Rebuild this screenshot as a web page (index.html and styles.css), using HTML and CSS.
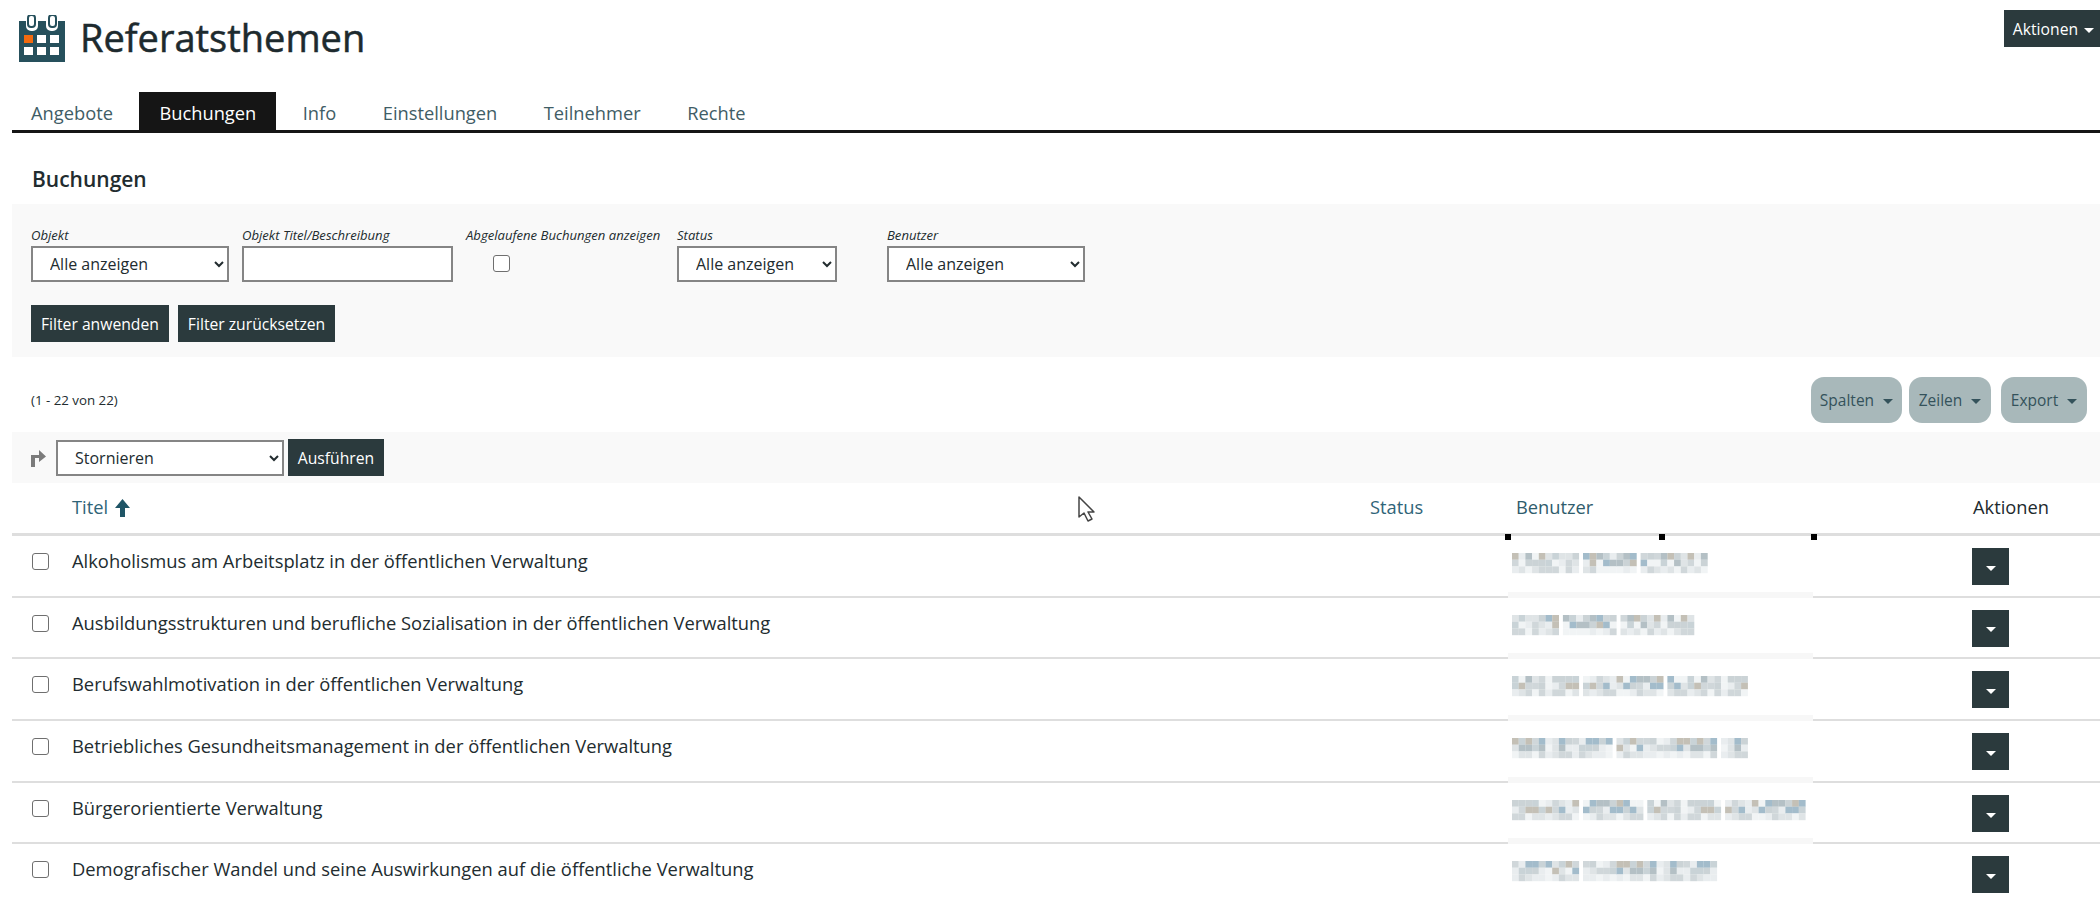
FILE: index.html
```html
<!DOCTYPE html>
<html lang="de">

<head>
    <meta charset="UTF-8">
    <title>Referatsthemen</title>
    <link rel="stylesheet" href="styles.css">
</head>

<body>
    <header class="page-head">
        <div class="title-wrap">
            <svg class="title-icon" viewBox="0 0 48 47" width="48" height="47">
                <path fill="#26505c" d="M1 6h7v5a5 5 0 0 0 5 5h2a5 5 0 0 0 5-5V6h8v5a5 5 0 0 0 5 5h2a5 5 0 0 0 5-5V6h7v41H1z" />
                <rect x="10" y="0" width="7" height="12" rx="3" fill="none" stroke="#26505c" stroke-width="2" />
                <rect x="31" y="0" width="7" height="12" rx="3" fill="none" stroke="#26505c" stroke-width="2" />
                <rect x="6" y="20" width="9" height="8" fill="#f26a0f" />
                <rect x="19" y="20" width="9" height="8" fill="#fff" />
                <rect x="32" y="20" width="9" height="8" fill="#fff" />
                <rect x="6" y="32" width="9" height="8" fill="#fff" />
                <rect x="19" y="32" width="9" height="8" fill="#fff" />
                <rect x="32" y="32" width="9" height="8" fill="#fff" />
            </svg>
            <h1>Referatsthemen</h1>
        </div>
        <button class="btn btn-top">Aktionen <span class="caret"></span></button>
    </header>

    <nav class="tabs">
        <a href="#">Angebote</a>
        <a href="#" class="active">Buchungen</a>
        <a href="#">Info</a>
        <a href="#">Einstellungen</a>
        <a href="#">Teilnehmer</a>
        <a href="#">Rechte</a>
    </nav>

    <h2>Buchungen</h2>

    <section class="filter">
        <div class="filter-row">
            <div class="field f-objekt">
                <label>Objekt</label>
                <select>
                    <option>Alle anzeigen</option>
                </select>
            </div>
            <div class="field f-titel">
                <label>Objekt Titel/Beschreibung</label>
                <input type="text">
            </div>
            <div class="field f-abgelaufen">
                <label>Abgelaufene Buchungen anzeigen</label>
                <input type="checkbox" class="check">
            </div>
            <div class="field f-status">
                <label>Status</label>
                <select>
                    <option>Alle anzeigen</option>
                </select>
            </div>
            <div class="field f-benutzer">
                <label>Benutzer</label>
                <select>
                    <option>Alle anzeigen</option>
                </select>
            </div>
        </div>
        <div class="filter-buttons">
            <button class="btn">Filter anwenden</button>
            <button class="btn">Filter zurücksetzen</button>
        </div>
    </section>

    <div class="toolbar">
        <span class="count">(1 - 22 von 22)</span>
        <div class="toolbar-buttons">
            <button class="pill">Spalten <span class="caret"></span></button>
            <button class="pill">Zeilen <span class="caret"></span></button>
            <button class="pill pill-export">Export <span class="caret"></span></button>
        </div>
    </div>

    <div class="bulk">
        <svg class="bulk-icon" viewBox="0 0 16 18" width="16" height="18">
            <path fill="#7b7b7b" d="M1 18V6h8V1l7 6.5L9 13V9H5v9z" />
        </svg>
        <select>
            <option>Stornieren</option>
        </select>
        <button class="btn">Ausführen</button>
    </div>

    <table class="bookings">
        <colgroup>
            <col class="c-check">
            <col class="c-titel">
            <col class="c-status">
            <col class="c-user">
            <col>
        </colgroup>
        <thead>
            <tr>
                <th></th>
                <th>Titel
                    <svg class="sort-icon" viewBox="0 0 15 18" width="15" height="18">
                        <path fill="#1f5566" d="M7.5 0L15 9h-5v9H5V9H0z" />
                    </svg>
                </th>
                <th>Status</th>
                <th class="th-user">Benutzer
                    <i class="handle h1"></i><i class="handle h2"></i><i class="handle h3"></i>
                </th>
                <th class="th-actions">Aktionen</th>
            </tr>
        </thead>
        <tbody>
            <tr>
                <td><input type="checkbox" class="check"></td>
                <td>Alkoholismus am Arbeitsplatz in der öffentlichen Verwaltung</td>
                <td></td>
                <td class="user"><div class="mosaic" data-words="10,8,10" data-seed="3"></div></td>
                <td><button class="btn btn-row"><span class="caret"></span></button></td>
            </tr>
            <tr>
                <td><input type="checkbox" class="check"></td>
                <td>Ausbildungsstrukturen und berufliche Sozialisation in der öffentlichen Verwaltung</td>
                <td></td>
                <td class="user"><div class="mosaic" data-words="7,8,11" data-seed="11"></div></td>
                <td><button class="btn btn-row"><span class="caret"></span></button></td>
            </tr>
            <tr>
                <td><input type="checkbox" class="check"></td>
                <td>Berufswahlmotivation in der öffentlichen Verwaltung</td>
                <td></td>
                <td class="user"><div class="mosaic" data-words="10,12,12" data-seed="23"></div></td>
                <td><button class="btn btn-row"><span class="caret"></span></button></td>
            </tr>
            <tr>
                <td><input type="checkbox" class="check"></td>
                <td>Betriebliches Gesundheitsmanagement in der öffentlichen Verwaltung</td>
                <td></td>
                <td class="user"><div class="mosaic" data-words="15,15,4" data-seed="37"></div></td>
                <td><button class="btn btn-row"><span class="caret"></span></button></td>
            </tr>
            <tr>
                <td><input type="checkbox" class="check"></td>
                <td>Bürgerorientierte Verwaltung</td>
                <td></td>
                <td class="user"><div class="mosaic" data-words="10,9,11,12" data-seed="41"></div></td>
                <td><button class="btn btn-row"><span class="caret"></span></button></td>
            </tr>
            <tr>
                <td><input type="checkbox" class="check"></td>
                <td>Demografischer Wandel und seine Auswirkungen auf die öffentliche Verwaltung</td>
                <td></td>
                <td class="user"><div class="mosaic" data-words="10,20" data-seed="59"></div></td>
                <td><button class="btn btn-row"><span class="caret"></span></button></td>
            </tr>
        </tbody>
    </table>

    <svg class="cursor" viewBox="0 0 17 26" width="17" height="26">
        <path fill="#fff" stroke="#444" stroke-width="1.5" stroke-linejoin="round" d="M1 1v20l5-4 4 8 4-2-4-7h6z" />
    </svg>

    <script src="script.js"></script>
</body>

</html>
```

FILE: styles.css
```css
* {
    box-sizing: border-box;
    margin: 0;
    padding: 0;
    font-family: "Open Sans", Arial, sans-serif;
}

html {
    overflow: hidden;
}

body {
    position: relative;
    width: 2100px;
    background: #fff;
    color: #222c2f;
}

.page-head {
    display: flex;
    justify-content: space-between;
    align-items: flex-start;
    height: 92px;
    padding: 10px 0 0 18px;
}

.title-wrap {
    display: flex;
    align-items: flex-start;
    gap: 14px;
    padding-top: 5px;
}

.title-icon {
    display: block;
}

h1 {
    font-size: 38px;
    font-weight: 400;
    line-height: 44px;
    color: #1d2a2e;
    -webkit-text-stroke: 0.5px #1d2a2e;
}

.btn {
    background: #2b3a3d;
    color: #fff;
    border: none;
    font-size: 15.7px;
    height: 37px;
    padding: 0 10px;
}

.btn-top {
    width: 96px;
    white-space: nowrap;
    padding: 0 0 0 3px;
}

.caret {
    display: inline-block;
    border-top: 5px solid currentColor;
    border-left: 5px solid transparent;
    border-right: 5px solid transparent;
    margin-left: 2px;
    vertical-align: middle;
}

.tabs {
    display: flex;
    height: 41px;
    margin-left: 12px;
    border-bottom: 3px solid #151515;
    font-size: 18.3px;
}

.tabs a {
    display: block;
    padding: 0 20px;
    line-height: 42px;
    height: 38px;
    color: #3f5d66;
    text-decoration: none;
    margin-right: 6.5px;
}

.tabs a:first-child {
    padding-left: 19px;
}

.tabs a.active {
    background: #151515;
    color: #fff;
}

h2 {
    font-size: 21px;
    font-weight: 600;
    line-height: 30px;
    margin: 31px 0 10px 32px;
    color: #222c2f;
}

.filter {
    margin-left: 12px;
    height: 153px;
    background: #f9f9f9;
    padding: 20px 0 0 19px;
}

.filter-row {
    display: flex;
}

.field label {
    display: block;
    font-size: 13.1px;
    font-style: italic;
    line-height: 22px;
    color: #222c2f;
}

select {
    display: block;
    height: 36px;
    border: 2px solid #858585;
    background: #fff;
    font-size: 16px;
    padding-left: 13px;
    color: #222c2f;
}

.field input[type="text"] {
    display: block;
    height: 36px;
    width: 100%;
    border: 2px solid #858585;
    background: #fff;
}

.f-objekt {
    width: 211px;
}

.f-objekt select {
    width: 198px;
}

.f-titel {
    width: 224px;
}

.f-titel input[type="text"] {
    width: 211px;
}

.f-abgelaufen {
    width: 211px;
    white-space: nowrap;
}

.f-abgelaufen .check {
    margin: 9px 0 0 27px;
}

.f-status {
    width: 210px;
}

.f-status select {
    width: 160px;
}

.f-benutzer select {
    width: 198px;
}

.check {
    display: block;
    appearance: none;
    width: 17px;
    height: 17px;
    border: 1.5px solid #6f6f6f;
    border-radius: 3px;
    background: #fff;
}

.filter-buttons {
    display: flex;
    gap: 9px;
    margin-top: 23px;
}

.toolbar {
    display: flex;
    justify-content: space-between;
    align-items: center;
    height: 46px;
    margin: 20px 13px 9px 31px;
}

.count {
    font-size: 13.3px;
}

.toolbar-buttons {
    display: flex;
}

.pill {
    height: 46px;
    background: #a8b8ba;
    color: #34525b;
    border: none;
    border-radius: 13px;
    font-size: 15.5px;
    width: 91px;
    margin-right: 7px;
    white-space: nowrap;
}

.pill:nth-child(2) {
    width: 82px;
    margin-right: 10px;
}

.pill-export {
    width: 86px;
    margin-right: 0;
}

.pill .caret {
    margin-left: 5px;
}

.bulk {
    display: flex;
    align-items: center;
    gap: 4px;
    height: 51px;
    margin-left: 12px;
    background: #f9f9f9;
    padding-left: 18px;
}

.bulk-icon {
    margin-right: 6px;
}

.bulk select {
    width: 228px;
}

.bulk .btn {
    width: 96px;
    padding: 0;
}

.bookings {
    table-layout: fixed;
    width: 2088px;
    margin-left: 12px;
    border-collapse: separate;
    border-spacing: 0;
}

.c-check {
    width: 51px;
}

.c-titel {
    width: 1298px;
}

.c-status {
    width: 147px;
}

.c-user {
    width: 464px;
}

.bookings th {
    height: 53px;
    font-size: 18.3px;
    font-weight: 400;
    text-align: left;
    padding: 0 0 3px 9px;
    color: #2f6478;
    border-bottom: 3px solid #dedede;
}

.bookings th.th-user {
    position: relative;
    padding-left: 8px;
    color: #2f5c6c;
}

.bookings th.th-actions {
    padding-left: 1px;
    color: #1d2a2e;
}

.sort-icon {
    vertical-align: -3px;
    margin-left: 2px;
}

.handle {
    position: absolute;
    top: 51px;
    width: 6px;
    height: 6px;
    background: #000;
}

.h1 {
    left: -3px;
}

.h2 {
    left: 151px;
}

.h3 {
    left: 303px;
}

.bookings td {
    height: 61.7px;
    vertical-align: top;
    font-size: 18.35px;
    line-height: 24px;
    padding: 13px 0 0 9px;
    border-bottom: 2px solid #dedede;
    color: #222c2f;
}

.bookings td:first-child {
    padding: 17px 0 0 20px;
}

.bookings td:last-child {
    padding: 12px 0 0 0;
}

.bookings td.user {
    position: relative;
    padding: 0;
}

/* light band left over under the blurred name */
.bookings td.user::after {
    content: "";
    position: absolute;
    left: 0;
    bottom: -2px;
    width: 305px;
    height: 6px;
    background: #f7f7f7;
}

.mosaic {
    margin: 17px 0 0 4px;
    line-height: 0;
    filter: blur(0.7px);
}

.btn-row {
    display: block;
    width: 37px;
    padding: 0;
}

.btn-row .caret {
    margin: 0;
}

.cursor {
    position: absolute;
    left: 1078px;
    top: 496px;
}
```

FILE: script.js
```js
// names are pixelated in the source, so draw them as small mosaics
const colors = ["#dfe4e6", "#c9d3d7", "#a3bccb", "#e9edef", "#d0d7da", "#b4c0c5", "#f1f4f5", "#c4c0b6", "#cbd3d6"];
const cell = 6.7;

document.querySelectorAll(".mosaic").forEach(function (el) {
    let seed = Number(el.dataset.seed);
    let x = 0;
    let svg = "";

    function next() {
        seed = (seed * 7 + 13) % 101;
        return seed;
    }

    el.dataset.words.split(",").forEach(function (word) {
        for (let i = 0; i < Number(word); i++) {
            for (let row = 0; row < 3; row++) {
                let color = colors[next() % colors.length];
                // bottom row of the mosaic is paler
                if (row === 2) color = colors[[0, 3, 6, 4][next() % 4]];
                svg += '<rect x="' + x.toFixed(1) + '" y="' + row * 6.7 + '" width="6.8" height="6.8" fill="' + color + '"/>';
            }
            x += cell;
        }
        x += cell * 0.6;
    });

    el.innerHTML = '<svg width="' + Math.ceil(x) + '" height="21">' + svg + "</svg>";
});
```
